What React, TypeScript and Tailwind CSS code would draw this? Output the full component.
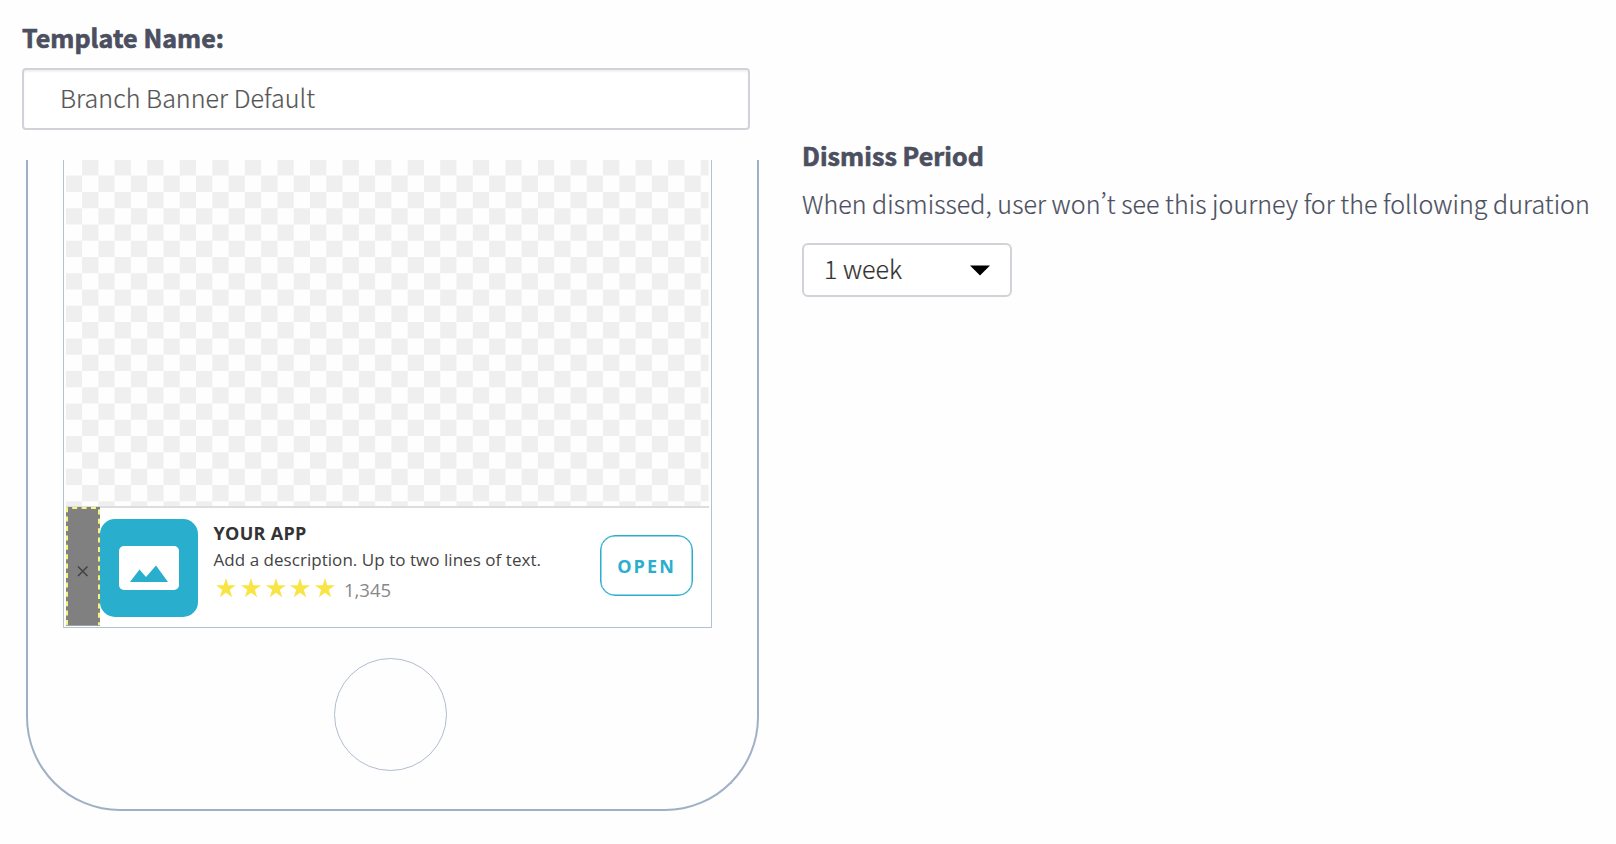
const CELL = 16.28;

function Checkerboard() {
  const width = 642.6;
  const height = 346;
  const firstRow = 15.6;
  let d = "";
  for (let r = 0; r < 23; r++) {
    const y0 = Math.max(0, firstRow + (r - 1) * CELL);
    const y1 = Math.min(height, firstRow + r * CELL);
    if (y1 <= y0) continue;
    for (let c = 0; c < 40; c++) {
      if ((r + c) % 2 === 0) continue;
      const x0 = Math.max(0, c * CELL - 0.2);
      const x1 = Math.min(width, (c + 1) * CELL - 0.2);
      if (x1 <= x0) continue;
      d += `M${x0} ${y0}H${x1}V${y1}H${x0}Z`;
    }
  }
  return (
    <svg width="643" height="346" viewBox="0 0 643 346" className="block shrink-0">
      <path d={d} fill="#efefef" />
    </svg>
  );
}

function Star() {
  return (
    <svg width="20" height="20" viewBox="0 0 20 20" className="block">
      <path d="M10 0L12.3 7.2H20L13.8 11.7L16.2 19.2L10 14.7L3.8 19.2L6.2 11.7L0 7.2H7.7Z" fill="#f8e545" />
    </svg>
  );
}

function AppIcon() {
  return (
    <div className="mt-[10.5px] flex h-[98px] w-[98px] shrink-0 items-center justify-center rounded-[15px] bg-[#2aaece]">
      <div className="flex h-[44px] w-[60px] justify-center rounded-[5px] bg-white pt-[19px]">
        <svg width="38" height="18" viewBox="0 0 38 18">
          <path d="M0 17L9.5 4.5L16 12L26 0.5L38 17Z" fill="#2aaece" />
        </svg>
      </div>
    </div>
  );
}

function Banner() {
  return (
    <div className="flex h-[120px] w-[643px] border-t-2 border-[#dddddd] bg-white font-['Open_Sans','Noto_Sans',sans-serif]">
      <div className="-mt-px flex h-[119px] w-[34px] shrink-0 items-center justify-center bg-[#808080]">
        <svg width="34" height="119" viewBox="0 0 34 119">
          <path d="M1 118V1H33V118" fill="none" stroke="#f5f57a" strokeWidth="2" strokeDasharray="5 4.4" />
          <path d="M0 118.5H34" stroke="#a0a0a0" />
          <path d="M12 59.5L21.5 69M21.5 59.5L12 69" stroke="#444" strokeWidth="1.6" fill="none" />
        </svg>
      </div>
      <AppIcon />
      <div className="flex flex-1 flex-col pl-[15.5px] pt-[12px]">
        <div className="h-[26px] whitespace-nowrap text-[18px] font-bold leading-[26px] tracking-[0.3px] text-[#333]">
          YOUR APP
        </div>
        <div className="h-[28px] whitespace-nowrap text-[17px] leading-[28px] tracking-[0.04px] text-[#444]">
          Add a description. Up to two lines of text.
        </div>
        <div className="flex items-start gap-[4.8px] pl-[2.5px] pt-[4px]">
          <Star />
          <Star />
          <Star />
          <Star />
          <Star />
          <span className="pl-[4px] text-[18.5px] leading-[24px] text-[#888]">1,345</span>
        </div>
      </div>
      <button className="mr-[16px] mt-[27px] flex h-[61px] w-[93px] items-center justify-center rounded-[15px] border border-[#2aaece] pt-px text-[18px] font-bold tracking-[2.1px] text-[#2aaece] shadow-[inset_0_0_0_0.5px_#2aaece]">
        OPEN
      </button>
    </div>
  );
}

function Phone() {
  return (
    <div className="ml-[4px] mt-[30px] flex h-[650.5px] w-[733px] flex-col items-center rounded-b-[94px] border-x-2 border-b-2 border-[#9fb0c6]">
      <div className="mr-[10px] flex h-[468px] w-[649px] flex-col items-center border-x border-b border-[#b4c1d2]">
        <Checkerboard />
        <Banner />
      </div>
      <div className="mr-[4px] mt-[30px] h-[113px] w-[113px] rounded-full border border-[#b0bdcf]" />
    </div>
  );
}

export default function App() {
  return (
    <div className="flex h-[844px] w-[1616px] overflow-hidden bg-[#fefefe] font-['Noto_Sans_CJK_SC',sans-serif] text-[#4c4f5f]">
      <div className="w-[780px] pl-[22px] pt-[18px]">
        <label className="block h-[50px] whitespace-nowrap text-[25px] font-bold leading-[38px] tracking-[0.08px] [-webkit-text-stroke:0.7px_#4c4f5f]">
          Template Name:
        </label>
        <div className="flex h-[62px] w-[728px] items-center rounded-[4px] border-2 border-[#d2d2d8] bg-white pb-[2px] pl-[36px] text-[25px] font-light tracking-[0.06px] text-[#555] shadow-[inset_0_2px_2px_rgba(0,0,0,0.06)] [-webkit-text-stroke:0.2px_#555]">
          <span className="whitespace-nowrap">Branch Banner Default</span>
        </div>
        <Phone />
      </div>
      <div className="flex-1 pl-[22px] pt-[136px]">
        <h2 className="h-[48px] whitespace-nowrap text-[25px] font-bold leading-[38px] tracking-[0.08px] [-webkit-text-stroke:0.7px_#4c4f5f]">
          Dismiss Period
        </h2>
        <p className="h-[59px] whitespace-nowrap text-[25px] font-light leading-[38px] tracking-[0.04px] [-webkit-text-stroke:0.2px_#4c4f5f] [font-feature-settings:'pwid']">
          When dismissed, user won’t see this journey for the following duration
        </p>
        <button className="flex h-[54px] w-[210px] items-center justify-between rounded-[6px] border-2 border-[#d2d2d8] bg-white pl-[20px] pr-[20px] text-[25px] font-light text-[#333] [-webkit-text-stroke:0.2px_#333]">
          <span className="-mt-[2px] whitespace-nowrap">1 week</span>
          <svg width="20" height="11" viewBox="0 0 20 11">
            <path d="M0 0.5H20L10 10.5Z" fill="#000" />
          </svg>
        </button>
      </div>
    </div>
  );
}
